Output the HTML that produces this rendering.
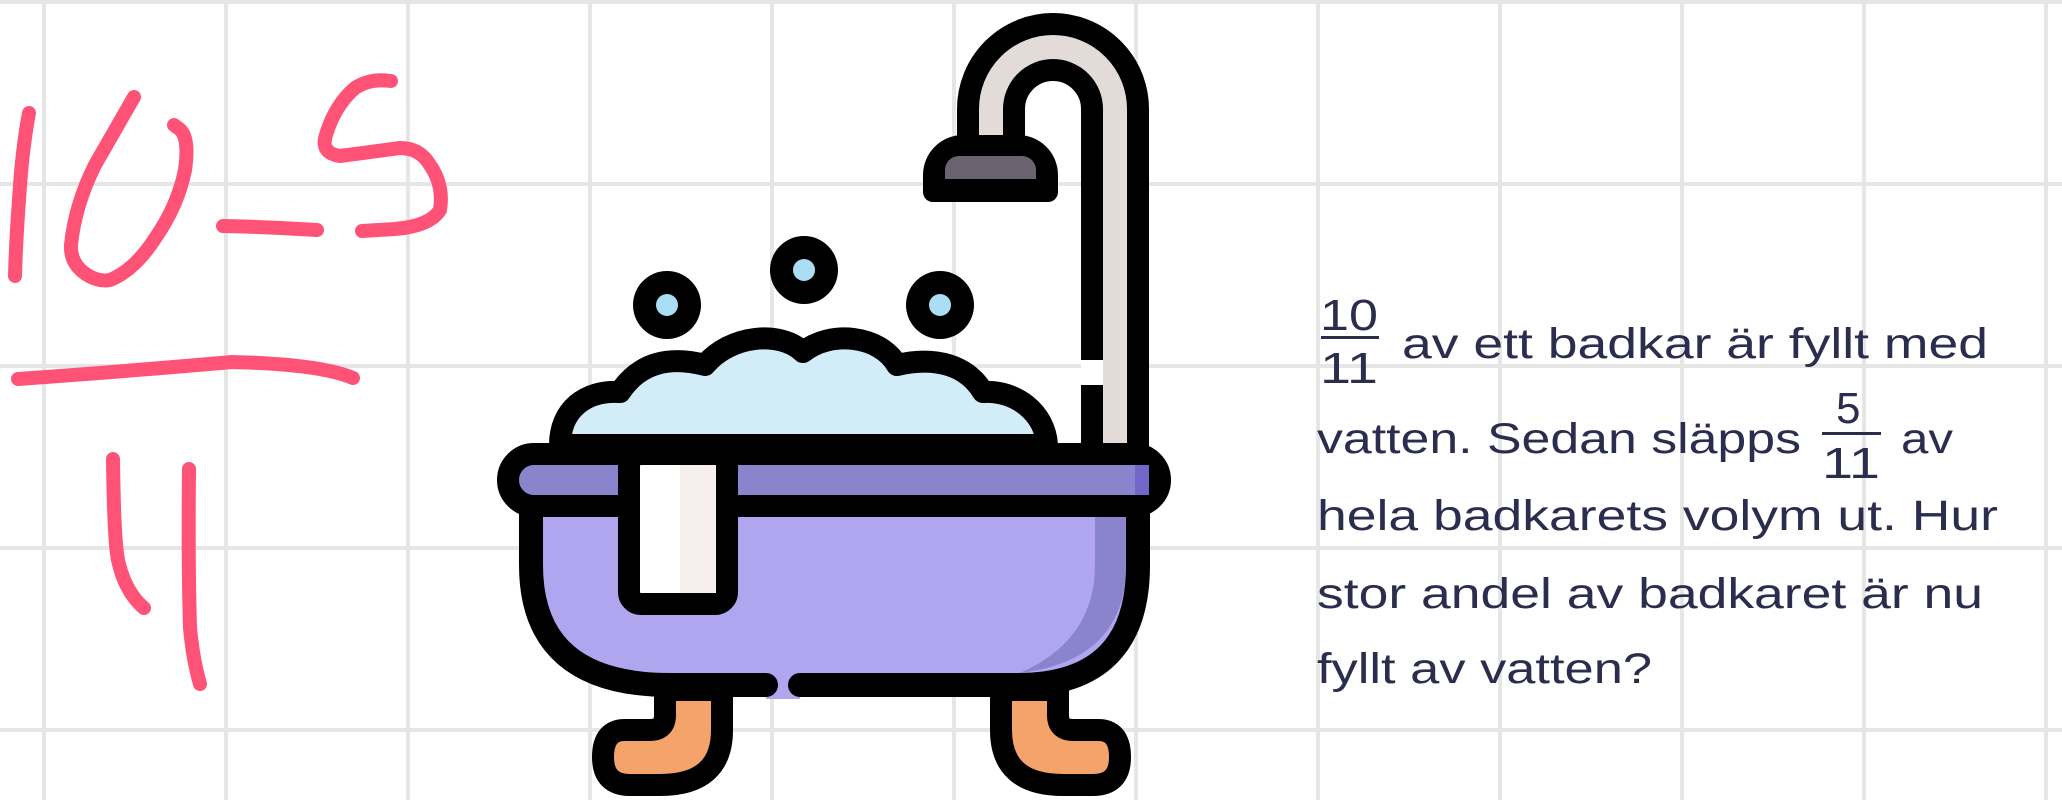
<!DOCTYPE html>
<html><head><meta charset="utf-8"><style>
html,body{margin:0;padding:0;background:#fff;}
body{width:2062px;height:800px;overflow:hidden;position:relative;}
svg{position:absolute;left:0;top:0;}
</style></head><body>
<svg width="2062" height="800" viewBox="0 0 2062 800" xmlns="http://www.w3.org/2000/svg">
<defs>
<pattern id="g" x="42" y="0" width="182" height="182" patternUnits="userSpaceOnUse">
<rect x="0" y="0" width="4" height="182" fill="#e6e6e6"/>
<rect x="0" y="0" width="182" height="4" fill="#e6e6e6"/>
</pattern>
</defs>
<rect width="2062" height="800" fill="#fff"/>
<rect width="2062" height="800" fill="url(#g)"/>

<!-- handwriting -->
<g fill="none" stroke="#ff5277" stroke-width="14" stroke-linecap="round" stroke-linejoin="round">
<path d="M29 113 Q22 150 19 200 Q16 240 15 276"/>
<path d="M134 97 Q115 130 95 165 Q75 205 71 245 Q70 265 89 276 Q100 282 110 280 Q135 270 156 237 Q178 205 185 170 Q190 135 178 128 L174 125"/>
<path d="M223 226 Q270 227 317 230"/>
<path d="M391 81 Q370 78 355 88 Q335 105 326 135 Q320 153 340 156 Q370 152 400 148 Q420 148 430 165 Q444 185 440 210 Q430 226 395 229 L362 231"/>
<path d="M18 379 Q130 371 232 362 Q320 364 353 378"/>
<path d="M113 459 Q114 540 118 560 Q125 592 144 608"/>
<path d="M189 469 Q188 560 190 628 Q193 660 200 684"/>
</g>

<!-- bathtub -->
<g stroke-linecap="round" stroke-linejoin="round">
<!-- pipe -->
<path d="M991 135 L991 109 A62 62 0 0 1 1115 109 L1115 450" fill="none" stroke="#000" stroke-width="68"/>
<path d="M991 140 L991 109 A62 62 0 0 1 1115 109 L1115 450" fill="none" stroke="#e2dbd7" stroke-width="24"/>
<path d="M1092 360 L1092 385" stroke="#fff" stroke-width="22" stroke-linecap="butt"/>
<!-- showerhead -->
<path d="M923 192 L923 175 A40 40 0 0 1 963 135 L1018 135 A40 40 0 0 1 1058 175 L1058 192 A10 10 0 0 1 1048 202 L933 202 A10 10 0 0 1 923 192Z" fill="#000"/>
<path d="M945 179 L945 170 A14 14 0 0 1 959 156 L1022 156 A14 14 0 0 1 1036 170 L1036 179Z" fill="#6b6270"/>
<!-- bubbles -->
<circle cx="667" cy="305" r="34" fill="#000"/><circle cx="667" cy="305" r="11" fill="#a9def5"/>
<circle cx="804" cy="270" r="34" fill="#000"/><circle cx="804" cy="270" r="11" fill="#a9def5"/>
<circle cx="940" cy="305" r="34" fill="#000"/><circle cx="940" cy="305" r="11" fill="#a9def5"/>
<!-- foam -->
<path d="M560 445 C560 410 585 390 620 392 C640 362 670 356 705 365 C730 335 780 330 803 352 C830 330 880 335 897 365 C935 356 967 365 983 392 C1015 390 1045 412 1047 445 Z" fill="#d2edf8" stroke="#000" stroke-width="22"/>
<!-- legs -->
<path d="M665 690 L665 715 Q665 730 650 730 L625 730 Q603 730 603 757 Q603 785 630 785 L660 785 Q722 785 722 730 L722 690Z" fill="#f4a46a" stroke="#000" stroke-width="22"/>
<path d="M1058 690 L1058 715 Q1058 730 1073 730 L1098 730 Q1120 730 1120 757 Q1120 785 1093 785 L1063 785 Q1001 785 1001 730 L1001 690Z" fill="#f4a46a" stroke="#000" stroke-width="22"/>
<!-- body -->
<path d="M531 505 L531 565 Q531 685 670 685 L1018 685 Q1138 685 1138 565 L1138 505Z" fill="#b0a6ef" stroke="#000" stroke-width="24"/>
<path d="M1095 505 L1126 505 L1126 565 Q1126 660 1020 673 Q1095 640 1095 565Z" fill="#8a84cc"/>
<rect x="766" y="671" width="34" height="28" fill="#b0a6ef"/>
<circle cx="766" cy="685" r="12" fill="#000"/>
<circle cx="800" cy="685" r="12" fill="#000"/>
<!-- rim -->
<rect x="508" y="454" width="652" height="52" rx="26" fill="#8a84cc" stroke="#000" stroke-width="22"/>
<rect x="1135" y="465" width="14" height="30" fill="#7067c8"/>
<!-- towel -->
<rect x="629" y="454" width="98" height="150" rx="12" fill="#fff" stroke="#000" stroke-width="22"/>
<rect x="680" y="465" width="36" height="128" fill="#f6efee"/>
</g>

<!-- text -->
<g font-family="'Liberation Sans', sans-serif" fill="#2b2d4e">
<text x="1320" y="330" font-size="44" textLength="58" lengthAdjust="spacingAndGlyphs">10</text>
<rect x="1321" y="336" width="58" height="3"/>
<text x="1320" y="383" font-size="44" textLength="58" lengthAdjust="spacingAndGlyphs">11</text>
<text x="1402" y="358" font-size="43" textLength="586" lengthAdjust="spacingAndGlyphs">av ett badkar är fyllt med</text>
<text x="1317" y="453" font-size="43" textLength="484" lengthAdjust="spacingAndGlyphs">vatten. Sedan släpps</text>
<text x="1836" y="423" font-size="44">5</text>
<rect x="1822" y="432" width="59" height="3"/>
<text x="1822" y="478" font-size="44" textLength="58" lengthAdjust="spacingAndGlyphs">11</text>
<text x="1901" y="453" font-size="43" textLength="52" lengthAdjust="spacingAndGlyphs">av</text>
<text x="1317" y="530" font-size="43" textLength="681" lengthAdjust="spacingAndGlyphs">hela badkarets volym ut. Hur</text>
<text x="1317" y="608" font-size="43" textLength="666" lengthAdjust="spacingAndGlyphs">stor andel av badkaret är nu</text>
<text x="1317" y="683" font-size="43" textLength="335" lengthAdjust="spacingAndGlyphs">fyllt av vatten?</text>
</g>
</svg>
</body></html>
